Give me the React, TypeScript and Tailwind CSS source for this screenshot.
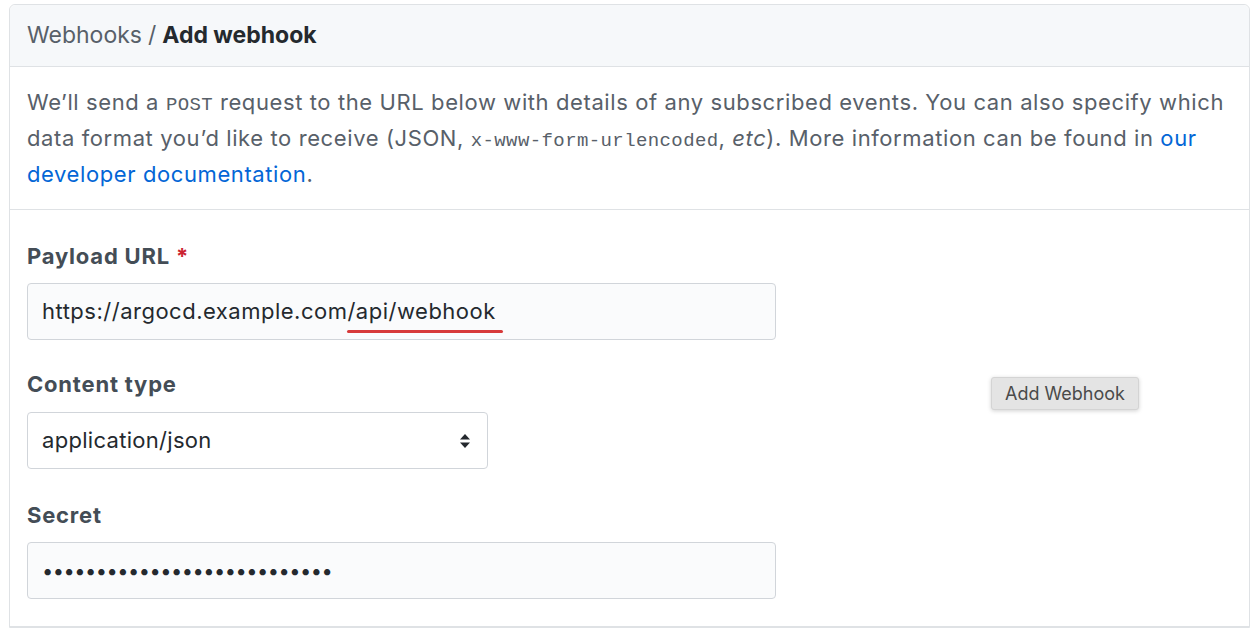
export default function App() {
  const dots = '•'.repeat(27);
  const mono = { fontFamily: '"Liberation Mono", monospace' };
  return (
    <div className="relative w-[1260px] h-[638px] bg-white overflow-hidden text-[#24292e]" style={{ fontFamily: 'Inter, "Liberation Sans", Arial, sans-serif' }}>
      <div className="ml-[9px] mt-1 w-[1241px] border border-[#dfe2e5] rounded-t-[6px]">
        {/* Header */}
        <div className="h-[62px] flex items-center px-[17px] bg-[#f6f8fa] border-b border-[#dfe2e5] rounded-t-[6px] text-[23px]">
          <span className="text-[#586069]">Webhooks</span>
          <span className="text-[#586069] mx-[6px]">/</span>
          <span className="font-bold">Add webhook</span>
        </div>

        {/* Description */}
        <div className="px-[17px] py-[17px] border-b border-[#dfe2e5] text-[22px] leading-[36px] tracking-[0.6px] text-[#586069]">
          We’ll send a <code className="text-[19px] leading-none tracking-[0.4px]" style={mono}>POST</code> request to the URL below with details of any subscribed events. You can also specify which data format you’d like to receive (JSON, <code className="text-[19px] leading-none tracking-[0.4px]" style={mono}>x-www-form-urlencoded</code>, <em>etc</em>). More information can be found in <a className="text-[#0366d6]">our developer documentation</a>.
        </div>

        {/* Form */}
        <div className="px-[17px] pt-[31px] pb-[27px] border-b border-[#dfe2e5]">
          <div className="text-[22px] leading-[30px] tracking-[0.8px] font-bold text-[#444d56]">
            Payload URL <span className="text-[#cb2431]">*</span>
          </div>
          <div className="mt-[12px] w-[749px] h-[57px] flex items-center px-[14px] bg-[#fafbfc] border border-[#d1d5da] rounded-[4px] text-[22px] tracking-[0.5px] text-[#24292e]">
            <span>https://argocd.example.com</span>
            <span className="relative">
              /api/webhook&nbsp;
              <span className="absolute left-0 right-0 bottom-[-5px] h-[3px] bg-[#d73a3a] rounded-full"></span>
            </span>
          </div>

          <div className="mt-[29px] text-[22px] leading-[30px] tracking-[0.8px] font-bold text-[#444d56]">Content type</div>
          <div className="mt-[13px] w-[461px] h-[57px] flex items-center justify-between px-[14px] bg-white border border-[#d1d5da] rounded-[4px] text-[22px] tracking-[0.3px]">
            <span>application/json</span>
            <svg width="12" height="16" viewBox="0 0 12 16" className="mr-[2px]">
              <path d="M6 1 L11 6.5 H1 Z" fill="#24292e" />
              <path d="M6 15 L11 9.5 H1 Z" fill="#24292e" />
            </svg>
          </div>

          <div className="mt-[31px] text-[22px] leading-[30px] tracking-[0.8px] font-bold text-[#444d56]">Secret</div>
          <div className="mt-[12px] w-[749px] h-[57px] flex items-center px-[14px] bg-[#fafbfc] border border-[#d1d5da] rounded-[4px] text-[20px] tracking-[-0.5px] text-[#24292e]">
            {dots}
          </div>
        </div>
      </div>

      {/* Tooltip-like button */}
      <div className="absolute left-[991px] top-[377px] w-[148px] h-[33px] flex items-center justify-center bg-[#e4e4e4] border border-[#d4d4d4] rounded-[3px] shadow-[0_1px_4px_rgba(0,0,0,0.18)] text-[18px] text-[#4a4a4a]">
        Add Webhook
      </div>
    </div>
  );
}
